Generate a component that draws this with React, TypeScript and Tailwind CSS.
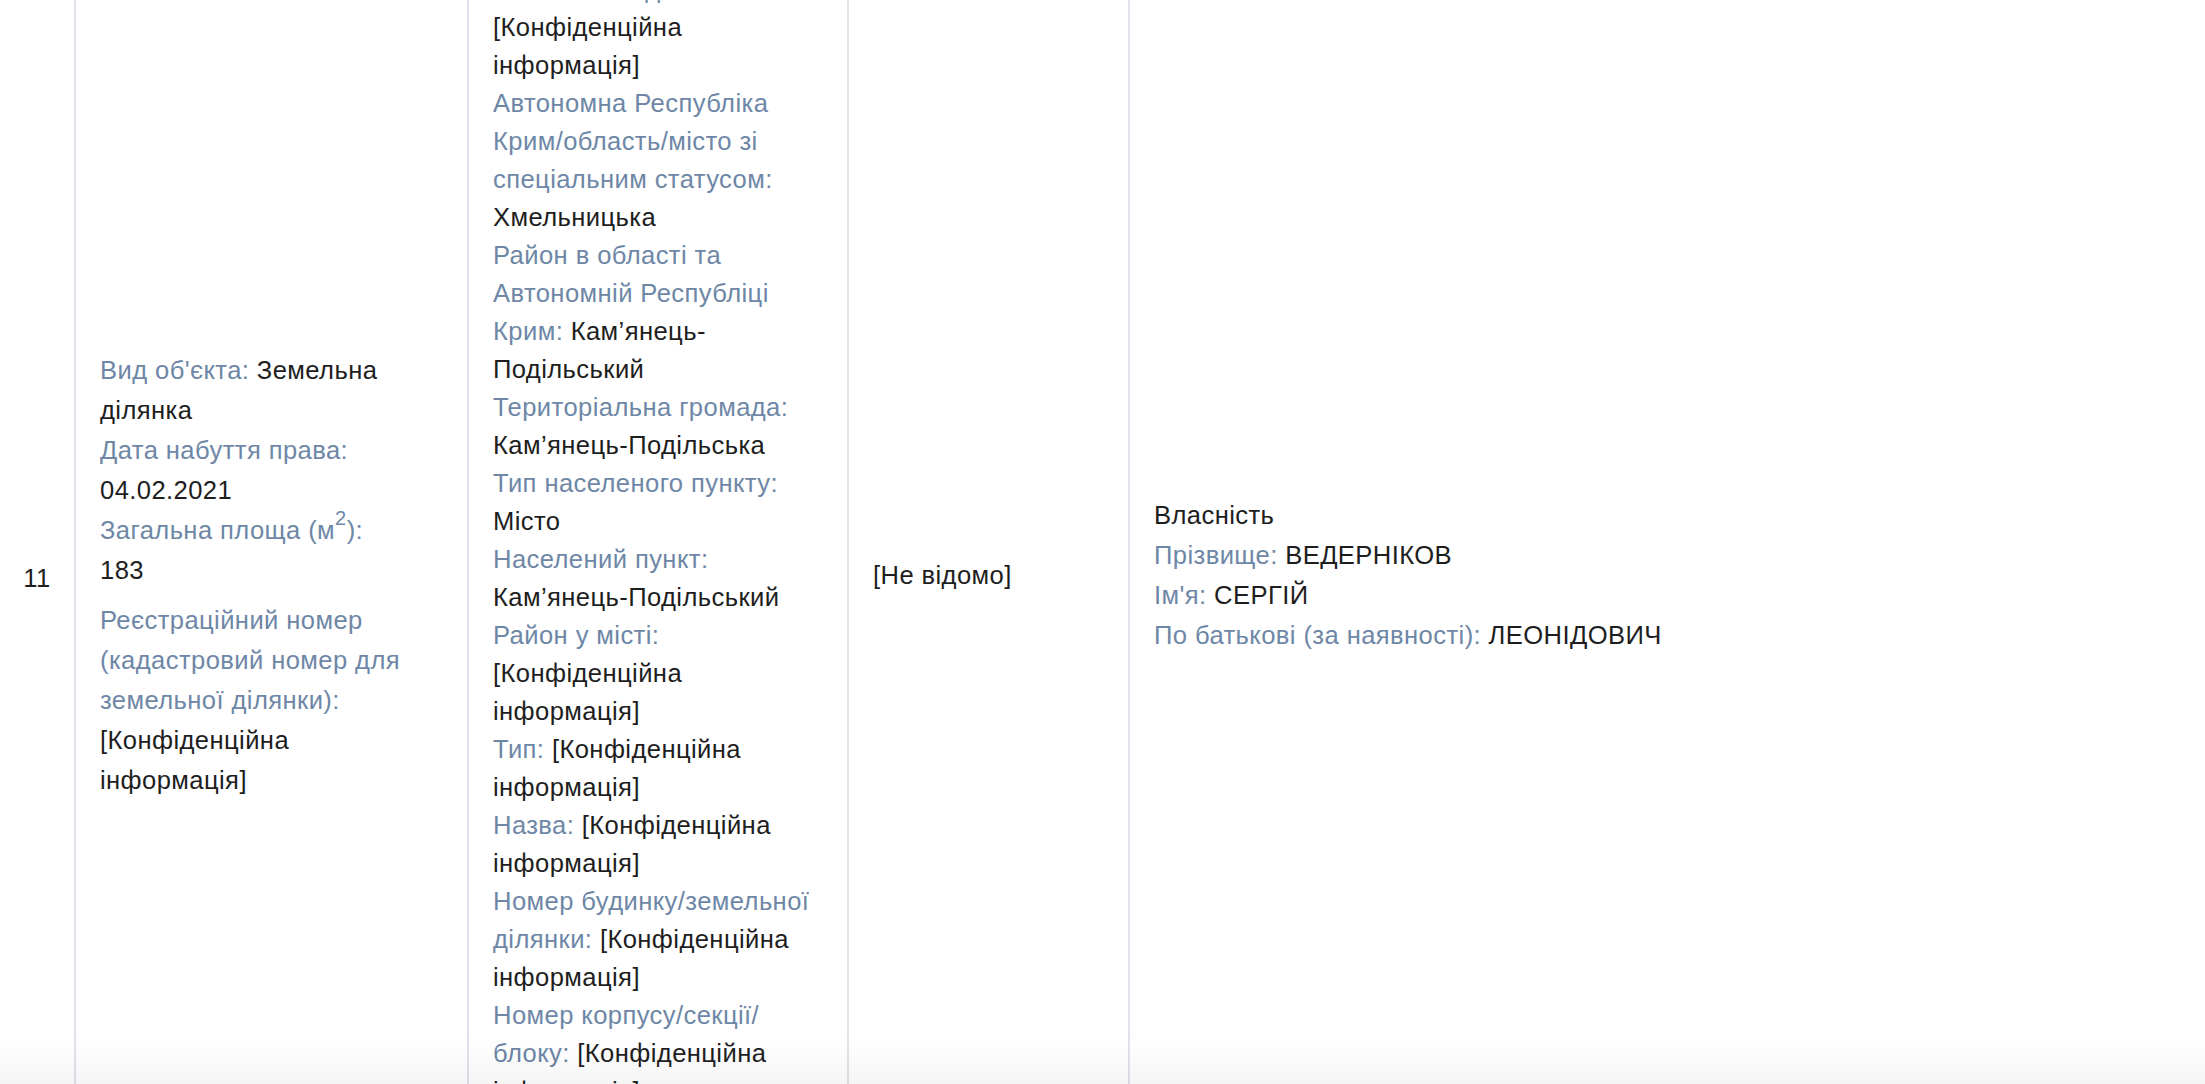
import type { ReactNode } from 'react';

type Field = { label: ReactNode; value?: string; className?: string };

const objectFields: Field[] = [
    { label: "Вид об'єкта:", value: 'Земельна ділянка' },
    { label: 'Дата набуття права:', value: '04.02.2021' },
    {
        label: (
            <>
                Загальна площа (м<sup className="text-[20px] -top-[14px]">2</sup>):
            </>
        ),
        value: '183',
    },
    {
        label: 'Реєстраційний номер (кадастровий номер для земельної ділянки):',
        value: '[Конфіденційна інформація]',
        className: 'mt-[10px]',
    },
];

const addressFields: Field[] = [
    { label: 'Країна:', value: 'Україна' },
    { label: 'Поштовий індекс:', value: '[Конфіденційна інформація]' },
    { label: 'Автономна Республіка Крим/область/місто зі спеціальним статусом:', value: 'Хмельницька' },
    { label: 'Район в області та Автономній Республіці Крим:', value: 'Кам’янець-Подільський' },
    { label: 'Територіальна громада:', value: 'Кам’янець-Подільська' },
    { label: 'Тип населеного пункту:', value: 'Місто' },
    { label: 'Населений пункт:', value: 'Кам’янець-Подільський' },
    { label: 'Район у місті:', value: '[Конфіденційна інформація]' },
    { label: 'Тип:', value: '[Конфіденційна інформація]' },
    { label: 'Назва:', value: '[Конфіденційна інформація]' },
    { label: 'Номер будинку/земельної ділянки:', value: '[Конфіденційна інформація]' },
    { label: 'Номер корпусу/секції/блоку:', value: '[Конфіденційна інформація]' },
    { label: 'Номер квартири:', value: '[Конфіденційна інформація]' },
];

const ownerFields: Field[] = [
    { label: 'Прізвище:', value: 'ВЕДЕРНІКОВ' },
    { label: "Ім'я:", value: 'СЕРГІЙ' },
    { label: 'По батькові (за наявності):', value: 'ЛЕОНІДОВИЧ' },
];

function FieldRow({ field }: { field: Field }) {
    return (
        <div className={field.className}>
            <span className="text-[#6e87a6]">{field.label}</span> {field.value}
        </div>
    );
}

export default function App() {
    return (
        <div className="relative h-screen overflow-hidden bg-white font-['Liberation_Sans',Arial,sans-serif] text-[25.6px] tracking-[0.4px] text-[#1e1e1e]">
            {/* row 11, scrolled part-way */}
            <div className="-mt-[96px] flex items-stretch">
                <div className="flex w-[74px] shrink-0 items-center justify-center pt-[6px] leading-[40px]">11</div>

                <div className="flex w-[393px] shrink-0 items-center border-l-2 border-[#dfe3e9] pl-6 pr-[62px] leading-[40px]">
                    <div>
                        {objectFields.map((f, i) => (
                            <FieldRow key={i} field={f} />
                        ))}
                    </div>
                </div>

                <div className="w-[380px] shrink-0 border-l-2 border-[#dfe3e9] pt-[28px] pb-[22px] pl-6 pr-6 leading-[38px]">
                    {addressFields.map((f, i) => (
                        <FieldRow key={i} field={f} />
                    ))}
                </div>

                <div className="flex w-[281px] shrink-0 items-center border-l-2 border-[#dfe3e9] pl-6 leading-[40px]">
                    [Не відомо]
                </div>

                <div className="flex flex-1 items-center border-l-2 border-[#dfe3e9] pl-6 leading-[40px]">
                    <div>
                        <div>Власність</div>
                        {ownerFields.map((f, i) => (
                            <FieldRow key={i} field={f} />
                        ))}
                    </div>
                </div>
            </div>

            {/* bottom fade */}
            <div className="pointer-events-none absolute inset-x-0 bottom-0 h-[48px] bg-linear-to-b from-white/0 to-black/[0.04]" />
        </div>
    );
}
